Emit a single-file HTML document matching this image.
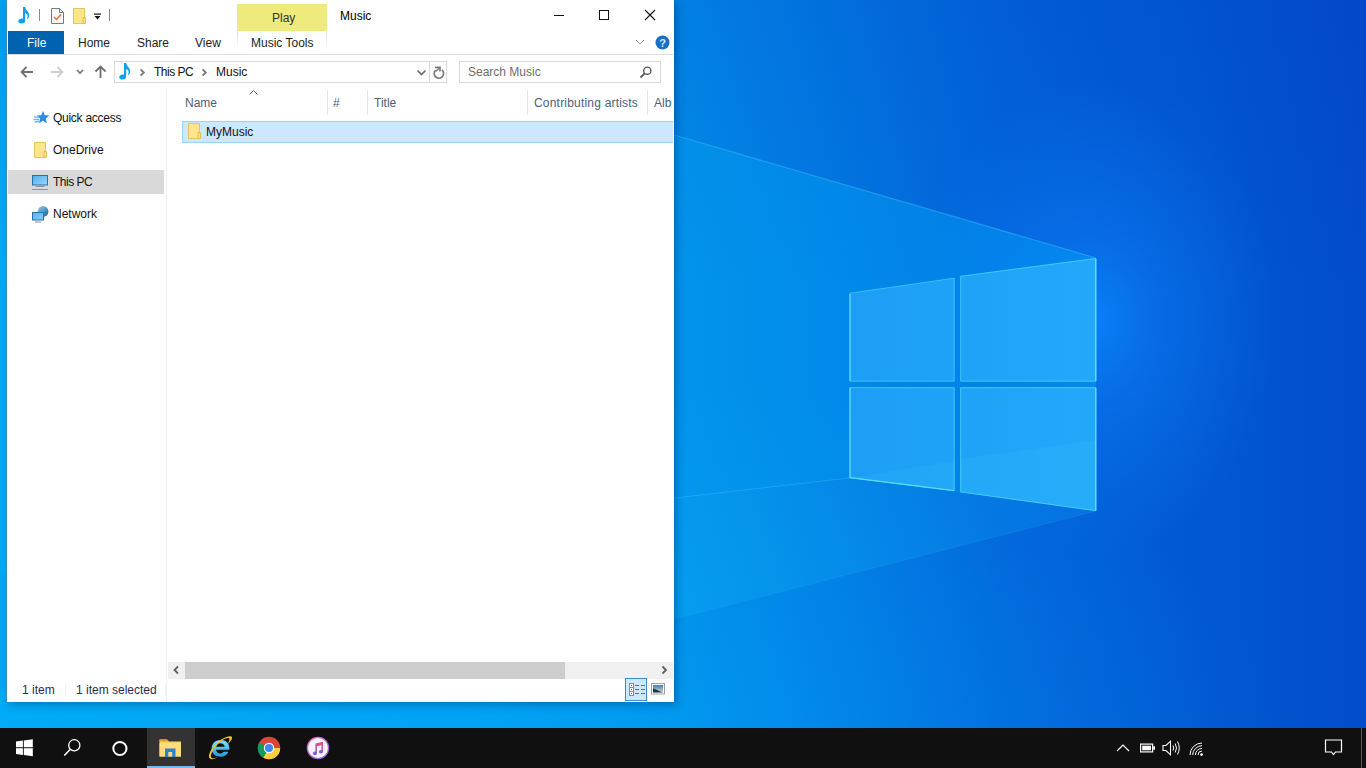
<!DOCTYPE html>
<html><head><meta charset="utf-8">
<style>
html,body{margin:0;padding:0;width:1366px;height:768px;overflow:hidden;font-family:"Liberation Sans",sans-serif;font-size:12px;}
.a{position:absolute;white-space:nowrap}
svg{position:absolute;overflow:visible}
.t{font-size:12px;line-height:14px;}
</style></head>
<body>
<!-- WALLPAPER -->
<svg class="a" style="left:0;top:0" width="1366" height="728" viewBox="0 0 1366 728">
<defs>
<linearGradient id="bg" x1="0" y1="0" x2="1366" y2="0" gradientUnits="userSpaceOnUse">
<stop offset="0" stop-color="#02a8f4"/>
<stop offset="0.493" stop-color="#028ce8"/>
<stop offset="0.622" stop-color="#0276e0"/>
<stop offset="0.732" stop-color="#0264da"/>
<stop offset="0.878" stop-color="#0258d2"/>
<stop offset="1" stop-color="#024ccb"/>
</linearGradient>
<linearGradient id="topdark" x1="0" y1="0" x2="0" y2="728" gradientUnits="userSpaceOnUse">
<stop offset="0" stop-color="#0028b8" stop-opacity="0.12"/>
<stop offset="0.4" stop-color="#0028b8" stop-opacity="0"/>
</linearGradient>
<radialGradient id="cyanbl" cx="640" cy="760" r="640" gradientTransform="translate(640 760) scale(1 0.6) translate(-640 -760)" gradientUnits="userSpaceOnUse">
<stop offset="0" stop-color="#00b0ff" stop-opacity="0.38"/>
<stop offset="1" stop-color="#00b0ff" stop-opacity="0"/>
</radialGradient>
<linearGradient id="beam" x1="674" y1="0" x2="1096" y2="0" gradientUnits="userSpaceOnUse">
<stop offset="0" stop-color="#00b8ff" stop-opacity="0.2"/>
<stop offset="0.42" stop-color="#00b8ff" stop-opacity="0.3"/>
<stop offset="1" stop-color="#00b8ff" stop-opacity="0.32"/>
</linearGradient>
<linearGradient id="floor" x1="300" y1="0" x2="1096" y2="0" gradientUnits="userSpaceOnUse">
<stop offset="0" stop-color="#10c0ff" stop-opacity="0"/>
<stop offset="0.47" stop-color="#10c0ff" stop-opacity="0.2"/>
<stop offset="1" stop-color="#10c0ff" stop-opacity="0.16"/>
</linearGradient>
<radialGradient id="glow" cx="1095" cy="320" r="240" gradientTransform="translate(1095 320) scale(0.75 1.0) translate(-1095 -320)" gradientUnits="userSpaceOnUse">
<stop offset="0" stop-color="#0a82fa" stop-opacity="0.9"/>
<stop offset="0.4" stop-color="#0a78f2" stop-opacity="0.5"/>
<stop offset="1" stop-color="#0a76f0" stop-opacity="0"/>
</radialGradient>
<linearGradient id="pane" x1="849" y1="0" x2="1096" y2="0" gradientUnits="userSpaceOnUse">
<stop offset="0" stop-color="#1c9ef4"/>
<stop offset="1" stop-color="#22a8fa"/>
</linearGradient>
<linearGradient id="botcyan" x1="0" y1="0" x2="700" y2="0" gradientUnits="userSpaceOnUse"><stop offset="0" stop-color="#00b4ff" stop-opacity="0.3"/><stop offset="0.7" stop-color="#00b4ff" stop-opacity="0.25"/><stop offset="1" stop-color="#00b4ff" stop-opacity="0"/></linearGradient>
</defs>
<rect width="1366" height="728" fill="url(#bg)"/>
<rect width="1366" height="728" fill="url(#topdark)"/>
<rect width="1366" height="728" fill="url(#cyanbl)"/>
<rect width="1366" height="728" fill="url(#glow)"/>
<rect x="0" y="690" width="700" height="38" fill="url(#botcyan)"/>
<polygon points="1096,258 0,-61 0,575 849,478 1096,511" fill="url(#beam)"/>
<path d="M1096,258 L674,135" stroke="#50d0ff" stroke-opacity="0.35" stroke-width="1.3"/>
<polygon points="849,478 1096,511 0,791 0,575" fill="url(#floor)"/>
<path d="M849,478 L674,498" stroke="#50d0ff" stroke-opacity="0.3" stroke-width="1"/>
<path d="M1096,511 L674,619" stroke="#50d0ff" stroke-opacity="0.12" stroke-width="1"/>
<g fill="url(#pane)">
<polygon points="849.6,292.9 954.6,277.8 954.6,381.6 849.6,381.6"/>
<polygon points="960.3,275.9 1096.2,258.1 1096.2,381.6 960.3,381.6"/>
<polygon points="849.6,387.3 954.6,387.3 954.6,491.1 849.6,477.9"/>
<polygon points="960.3,387.3 1096.2,387.3 1096.2,511.1 960.3,492.3"/>
</g>
<polygon points="849.6,477.9 954.6,461 954.6,491.1" fill="#40d0ff" fill-opacity="0.14"/>
<polygon points="960.3,459 1096.2,440 1096.2,511.1 960.3,492.3" fill="#40d0ff" fill-opacity="0.14"/>
<g fill="none" stroke="#5ce4fa" stroke-width="1">
<polygon points="850,293.2 954.2,278.2 954.2,381.2 850,381.2" stroke-opacity="0.45"/>
<polygon points="960.7,276.3 1095.8,258.5 1095.8,381.2 960.7,381.2" stroke-opacity="0.55"/>
<polygon points="850,387.7 954.2,387.7 954.2,490.7 850,477.6" stroke-opacity="0.55"/>
<polygon points="960.7,387.7 1095.8,387.7 1095.8,510.7 960.7,491.9" stroke-opacity="0.6"/>
</g>
<g fill="none" stroke="#70f0ff" stroke-width="1.3">
<path d="M850,294 V381 M850,388 V477.6 L954,490.6" stroke-opacity="0.6"/>
<path d="M1095.8,259 V381 M1095.8,388 V510.5" stroke-opacity="0.65"/>
</g>
</svg>

<!-- WINDOW -->
<div class="a" style="left:6px;top:0;width:668px;height:702px;background:#fff;box-shadow:3px 3px 8px rgba(0,20,60,0.3);border-left:1px solid #3d8fc0;box-sizing:border-box"></div>
<div class="a" id="win" style="left:0;top:0;width:674px;height:702px;">
<!-- title bar icons -->
<svg style="left:17px;top:6px" width="14" height="18" viewBox="0 0 14 18"><path d="M6 1 H8.2 C8.5 3.3 10 4.8 11.2 6.2 C12.6 7.8 12.4 10.8 10.9 12.9 L10.1 12.5 C10.9 10.6 10.8 8.9 9.7 8 C9.2 7.6 8.6 7.3 8.2 7.1 V14.8 C8.2 16.6 6.6 17.4 4.6 17.4 C2.6 17.4 1.2 16.6 1.2 15.3 C1.2 13.6 3 12.4 5 12.4 C5.4 12.4 5.7 12.5 6 12.6 Z" fill="#12a0ee"/></svg>
<div class="a" style="left:39px;top:9px;width:1px;height:12px;background:#8a8a8a"></div>
<svg style="left:50px;top:7px" width="15" height="18" viewBox="0 0 15 18"><path d="M1.5 1.5 H9.5 L13.5 5.5 V16.5 H1.5 Z" fill="#f7f7f7" stroke="#7a7a7a" stroke-width="1"/><path d="M9.5 1.5 V5.5 H13.5" fill="none" stroke="#7a7a7a" stroke-width="1"/><path d="M4 10 L6.5 12.5 L11 7.5" fill="none" stroke="#e8713a" stroke-width="1.5"/></svg>
<svg style="left:72px;top:7px" width="16" height="18" viewBox="0 0 16 18"><path d="M1.5 1.5 H12.5 V16.5 H1.5 Z" fill="#fde58c" stroke="#e4c35c" stroke-width="1"/><path d="M11 10.5 H13.5 V16.5 H11 Z" fill="#fbe27e" stroke="#dfbb50" stroke-width="0.9"/></svg>
<svg style="left:93px;top:13px" width="9" height="8" viewBox="0 0 9 8"><rect x="1" y="0.5" width="7" height="1.2" fill="#111"/><path d="M1.5 3 H7.5 L4.5 6.5 Z" fill="#111"/></svg>
<div class="a" style="left:109px;top:9px;width:1px;height:12px;background:#8a8a8a"></div>
<!-- Play contextual tab -->
<div class="a" style="left:237px;top:4px;width:90px;height:27px;background:#eeea7c"></div>
<div class="a" style="left:237px;top:31px;width:1px;height:19px;background:linear-gradient(#dcdcdc,#fff)"></div>
<div class="a" style="left:326px;top:31px;width:1px;height:19px;background:linear-gradient(#dcdcdc,#fff)"></div>
<div class="a t" style="left:272px;top:11px;color:#333;">Play</div>
<div class="a t" style="left:340px;top:9px;color:#000;">Music</div>
<!-- window controls -->
<div class="a" style="left:554px;top:15px;width:10px;height:1px;background:#111"></div>
<div class="a" style="left:599px;top:10px;width:10px;height:10px;box-sizing:border-box;border:1px solid #111"></div>
<svg style="left:644px;top:9px" width="12" height="12" viewBox="0 0 12 12"><path d="M1 1 L11 11 M11 1 L1 11" stroke="#111" stroke-width="1.1"/></svg>
<!-- ribbon tabs -->
<div class="a" style="left:8px;top:31px;width:56px;height:23px;background:#0063b1"></div>
<div class="a t" style="left:27px;top:36px;color:#fff;">File</div>
<div class="a t" style="left:78px;top:36px;color:#222;">Home</div>
<div class="a t" style="left:137px;top:36px;color:#222;">Share</div>
<div class="a t" style="left:195px;top:36px;color:#222;">View</div>
<div class="a t" style="left:251px;top:36px;color:#222;">Music Tools</div>
<div class="a" style="left:7px;top:54px;width:666px;height:1px;background:#dadbdc"></div>
<svg style="left:635px;top:39px" width="10" height="7" viewBox="0 0 10 7"><path d="M1 1 L5 5 L9 1" fill="none" stroke="#9a9a9a" stroke-width="1"/></svg>
<svg style="left:655px;top:35px" width="15" height="15" viewBox="0 0 15 15"><circle cx="7.5" cy="7.5" r="7" fill="#1a6fc0"/><text x="7.5" y="11.6" font-family="Liberation Sans" font-weight="bold" font-size="11" fill="#cfefff" text-anchor="middle">?</text></svg>
<!-- nav arrows -->
<svg style="left:19px;top:65px" width="16" height="14" viewBox="0 0 16 14"><path d="M2.5 7 H14 M7.5 2 L2.5 7 L7.5 12" fill="none" stroke="#707070" stroke-width="1.8"/></svg>
<svg style="left:49px;top:65px" width="16" height="14" viewBox="0 0 16 14"><path d="M2 7 H13.5 M8.5 2 L13.5 7 L8.5 12" fill="none" stroke="#cfcfcf" stroke-width="1.8"/></svg>
<svg style="left:75px;top:68px" width="10" height="7" viewBox="0 0 10 7"><path d="M2 2 L5 5 L8 2" fill="none" stroke="#707070" stroke-width="1.6"/></svg>
<svg style="left:93px;top:64px" width="15" height="16" viewBox="0 0 15 16"><path d="M7.5 2.5 V14 M2.5 7.5 L7.5 2.5 L12.5 7.5" fill="none" stroke="#707070" stroke-width="1.8"/></svg>
<!-- address bar -->
<div class="a" style="left:114px;top:61px;width:333px;height:22px;box-sizing:border-box;border:1px solid #d9d9d9"></div>
<div class="a" style="left:429px;top:61px;width:1px;height:22px;background:#d9d9d9"></div>
<svg style="left:118px;top:62px" width="14" height="18" viewBox="0 0 14 18"><path d="M6 1 H8.2 C8.5 3.3 10 4.8 11.2 6.2 C12.6 7.8 12.4 10.8 10.9 12.9 L10.1 12.5 C10.9 10.6 10.8 8.9 9.7 8 C9.2 7.6 8.6 7.3 8.2 7.1 V14.8 C8.2 16.6 6.6 17.4 4.6 17.4 C2.6 17.4 1.2 16.6 1.2 15.3 C1.2 13.6 3 12.4 5 12.4 C5.4 12.4 5.7 12.5 6 12.6 Z" fill="#12a0ee"/></svg>
<svg style="left:139px;top:68px" width="7" height="9" viewBox="0 0 7 9"><path d="M1.6 1.3 L4.8 4.5 L1.6 7.7" fill="none" stroke="#7a7a7a" stroke-width="1.9"/></svg>
<div class="a t" style="left:154px;top:65px;color:#111;letter-spacing:-0.5px">This PC</div>
<svg style="left:201px;top:68px" width="7" height="9" viewBox="0 0 7 9"><path d="M1.6 1.3 L4.8 4.5 L1.6 7.7" fill="none" stroke="#7a7a7a" stroke-width="1.9"/></svg>
<div class="a t" style="left:216px;top:65px;color:#111;">Music</div>
<svg style="left:416px;top:69px" width="11" height="8" viewBox="0 0 11 8"><path d="M1.5 1.5 L5.5 5.5 L9.5 1.5" fill="none" stroke="#6a6a6a" stroke-width="1.6"/></svg>
<svg style="left:432px;top:65px" width="14" height="14" viewBox="0 0 14 14"><path d="M3.6 5.2 A4.7 4.7 0 1 0 9.9 4.9" fill="none" stroke="#7a7a7a" stroke-width="1.7"/><path d="M3 2.4 H8 V6.6" fill="none" stroke="#7a7a7a" stroke-width="1.6"/><path d="M8 2.4 L4 6.2" stroke="#7a7a7a" stroke-width="1.5"/></svg>
<div class="a" style="left:459px;top:61px;width:202px;height:22px;box-sizing:border-box;border:1px solid #d9d9d9"></div>
<div class="a t" style="left:468px;top:65px;color:#6d6d6d;">Search Music</div>
<svg style="left:639px;top:65px" width="14" height="14" viewBox="0 0 14 14"><circle cx="8.3" cy="5.7" r="3.6" fill="none" stroke="#5a5a5a" stroke-width="1.4"/><path d="M5.7 8.3 L1.5 12.5" stroke="#5a5a5a" stroke-width="1.8"/></svg>
<!-- nav pane -->
<div class="a" style="left:166px;top:88px;width:1px;height:614px;background:#f0f0f0"></div>
<div class="a" style="left:8px;top:170px;width:156px;height:24px;background:#d9d9d9"></div>
<svg style="left:33px;top:110px" width="17" height="16" viewBox="0 0 17 16"><path d="M10 1 L11.8 5.3 L16.3 5.6 L12.8 8.6 L13.9 13.2 L10 10.7 L6 13.2 L7.1 8.6 L3.6 5.6 L8.2 5.3 Z" fill="#2e8de0"/><path d="M1 7 L6 7.2 M0.5 9.5 L6.5 9.5 M1.5 12 L6 11.5" stroke="#6db8f0" stroke-width="1.3"/></svg>
<div class="a t" style="left:53px;top:111px;color:#111;letter-spacing:-0.27px">Quick access</div>
<svg style="left:33px;top:141px" width="16" height="18" viewBox="0 0 16 18"><path d="M1.5 1.5 H12.5 V16.5 H1.5 Z" fill="#fde58c" stroke="#e4c35c" stroke-width="1"/><path d="M11 10.5 H13.5 V16.5 H11 Z" fill="#fbe27e" stroke="#dfbb50" stroke-width="0.9"/></svg>
<div class="a t" style="left:53px;top:143px;color:#111;">OneDrive</div>
<svg style="left:31px;top:174px" width="18" height="17" viewBox="0 0 18 17"><defs><linearGradient id="pcg" x1="0" y1="0" x2="1" y2="1"><stop offset="0" stop-color="#4fb0ee"/><stop offset="1" stop-color="#9ad8fb"/></linearGradient></defs><rect x="1.5" y="1.5" width="15" height="9.5" fill="url(#pcg)" stroke="#2c6ea8" stroke-width="1"/><rect x="5" y="12" width="8" height="1" fill="#8a96a4"/><rect x="1" y="15" width="16" height="1" fill="#8a98a8"/></svg>
<div class="a t" style="left:53px;top:175px;color:#111;letter-spacing:-0.5px">This PC</div>
<svg style="left:31px;top:205px" width="18" height="18" viewBox="0 0 18 18"><defs><linearGradient id="glb" x1="0" y1="0" x2="1" y2="1"><stop offset="0" stop-color="#a8d4ee"/><stop offset="0.5" stop-color="#4a98c8"/><stop offset="1" stop-color="#1e5a88"/></linearGradient><linearGradient id="mng" x1="0" y1="0" x2="1" y2="1"><stop offset="0" stop-color="#4fb0ee"/><stop offset="1" stop-color="#8ad0fa"/></linearGradient></defs><circle cx="12" cy="6.5" r="5.4" fill="url(#glb)"/><path d="M8 4 Q11 2.5 14 5 Q12 8 9 7" fill="#5aa8d8" opacity="0.7"/><rect x="1.5" y="7.5" width="11" height="7.5" fill="url(#mng)" stroke="#2c6ea8" stroke-width="1"/><rect x="4" y="16.5" width="6" height="1" fill="#7a8a9a"/></svg>
<div class="a t" style="left:53px;top:207px;color:#111;">Network</div>
<!-- column headers -->
<div class="a t" style="left:185px;top:96px;color:#4c607a;">Name</div>
<svg style="left:248px;top:89px" width="11" height="7" viewBox="0 0 11 7"><path d="M1.5 5.5 L5.5 1.5 L9.5 5.5" fill="none" stroke="#6a6a6a" stroke-width="1"/></svg>
<div class="a" style="left:327px;top:90px;width:1px;height:25px;background:#e5e5e5"></div>
<div class="a t" style="left:333px;top:96px;color:#4c607a;">#</div>
<div class="a" style="left:367px;top:90px;width:1px;height:25px;background:#e5e5e5"></div>
<div class="a t" style="left:374px;top:96px;color:#4c607a;">Title</div>
<div class="a" style="left:527px;top:90px;width:1px;height:25px;background:#e5e5e5"></div>
<div class="a t" style="left:534px;top:96px;color:#4c607a;letter-spacing:0.2px">Contributing artists</div>
<div class="a" style="left:647px;top:90px;width:1px;height:25px;background:#e5e5e5"></div>
<div class="a" style="left:654px;top:96px;width:18px;overflow:hidden;"><span class="t" style="color:#4c607a;">Album</span></div>
<!-- selected row -->
<div class="a" style="left:182px;top:121px;width:491px;height:22px;box-sizing:border-box;border:1px solid #99d1ff;border-right:none;background:#cce8ff"></div>
<svg style="left:187px;top:122px" width="16" height="18" viewBox="0 0 16 18"><path d="M1.5 1.5 H12.5 V16.5 H1.5 Z" fill="#fde58c" stroke="#e4c35c" stroke-width="1"/><path d="M11 10.5 H13.5 V16.5 H11 Z" fill="#fbe27e" stroke="#dfbb50" stroke-width="0.9"/></svg>
<div class="a t" style="left:206px;top:125px;color:#111;">MyMusic</div>
<!-- h scrollbar -->
<div class="a" style="left:168px;top:662px;width:505px;height:17px;background:#f0f0f0"></div>
<div class="a" style="left:185px;top:662px;width:380px;height:17px;background:#cdcdcd"></div>
<svg style="left:172px;top:665px" width="9" height="10" viewBox="0 0 9 10"><path d="M6 1.5 L2.5 5 L6 8.5" fill="none" stroke="#606060" stroke-width="1.8"/></svg>
<svg style="left:660px;top:665px" width="9" height="10" viewBox="0 0 9 10"><path d="M2.5 1.5 L6 5 L2.5 8.5" fill="none" stroke="#606060" stroke-width="1.8"/></svg>
<!-- status bar -->
<div class="a t" style="left:22px;top:683px;color:#1e3050;">1 item</div>
<div class="a" style="left:65px;top:684px;width:1px;height:12px;background:#f0f0f0"></div>
<div class="a t" style="left:76px;top:683px;color:#1e3050;">1 item selected</div>
<div class="a" style="left:165px;top:684px;width:1px;height:12px;background:#f0f0f0"></div>
<div class="a" style="left:625px;top:678px;width:22px;height:23px;box-sizing:border-box;border:1px solid #3f8cc0;background:#cce8ff"></div>
<svg style="left:628px;top:682px" width="18" height="16" viewBox="0 0 18 16"><rect x="1.5" y="1.5" width="4" height="12" fill="#fff" stroke="#8a8a8a" stroke-width="1"/><path d="M1.5 5.5 H5.5 M1.5 9.5 H5.5" stroke="#8a8a8a" stroke-width="1"/><rect x="3" y="3" width="1" height="1" fill="#555"/><rect x="3" y="7" width="1" height="1" fill="#555"/><rect x="3" y="11" width="1" height="1" fill="#c04040"/><path d="M7 3.5 H11 M13 3.5 H17 M7 7.5 H11 M13 7.5 H17 M7 11.5 H11 M13 11.5 H17" stroke="#6a6a6a" stroke-width="1.1"/></svg>
<svg style="left:651px;top:683px" width="15" height="12" viewBox="0 0 15 12"><rect x="0.5" y="0.5" width="13" height="10.5" fill="#fff" stroke="#a0a0a0" stroke-width="1"/><defs><linearGradient id="sky" x1="0" y1="0" x2="0" y2="1"><stop offset="0" stop-color="#4a7aa8"/><stop offset="1" stop-color="#c8dcea"/></linearGradient></defs><rect x="2" y="2" width="10" height="7.5" fill="url(#sky)"/><path d="M2 5.5 Q5 6 8 8 L12 9.5 H2 Z" fill="#1e3a30"/></svg>
</div>
<!-- TASKBAR -->
<div class="a" style="left:0;top:728px;width:1366px;height:40px;background:#101010">
<svg style="left:16px;top:11px" width="17" height="18" viewBox="0 0 17 18"><path d="M0 2.6 L6.9 1.6 V8.3 H0 Z M7.8 1.5 L16.8 0.2 V8.3 H7.8 Z M0 9.2 H6.9 V15.9 L0 14.9 Z M7.8 9.2 H16.8 V17.3 L7.8 16 Z" fill="#fff"/></svg>
<svg style="left:63px;top:10px" width="19" height="19" viewBox="0 0 19 19"><circle cx="11.3" cy="7.3" r="5.6" fill="none" stroke="#fff" stroke-width="1.3"/><path d="M7.3 11.3 L1.3 17.6" stroke="#fff" stroke-width="1.5"/></svg>
<svg style="left:111px;top:12px" width="18" height="18" viewBox="0 0 18 18"><circle cx="8.9" cy="8.5" r="6.6" fill="none" stroke="#fff" stroke-width="2"/></svg>
<div class="a" style="left:147px;top:0;width:48px;height:40px;background:#333"></div>
<div class="a" style="left:147px;top:38px;width:48px;height:2px;background:#76b9ed"></div>
<svg style="left:159px;top:10px" width="23" height="20" viewBox="0 0 23 20"><path d="M0.5 1.5 H8 L10 3.5 H22 V18.5 H0.5 Z" fill="#f8d36a"/><path d="M0.5 1.5 H8 L10 3.5 H0.5 Z" fill="#e0a32a"/><rect x="0.5" y="5" width="21.5" height="13.5" fill="#fcdc7c"/><path d="M6 19 V10.5 H16.5 V19 H13.2 V14 H9.3 V19 Z" fill="#2b80d6"/></svg>
<svg style="left:207px;top:7px" width="26" height="25" viewBox="0 0 26 25"><defs><linearGradient id="ieg" x1="0" y1="0" x2="0" y2="1"><stop offset="0" stop-color="#7fe0ff"/><stop offset="1" stop-color="#1aa0e0"/></linearGradient></defs><path d="M13.5 5 C8 5 4.6 9 4.6 13.6 C4.6 18.6 8.3 21.8 13.3 21.8 C17 21.8 20 20 21.4 16.8 H16.6 C15.8 18 14.6 18.6 13.4 18.6 C11 18.6 9.2 17 9 14.8 H22.3 C22.4 14.2 22.4 13.6 22.4 13.2 C22.4 8.4 18.8 5 13.5 5 Z M9.1 11.8 C9.4 9.6 11.2 8.2 13.4 8.2 C15.6 8.2 17.4 9.6 17.7 11.8 Z" fill="url(#ieg)"/><path d="M2.6 23.2 C-0.2 20.6 5.8 9.6 14.6 4.2 C21 0.4 25.4 0.4 25.1 3.1 C24.9 5 22.7 7.4 20.6 9.2 C21.9 7 23 4.6 22.3 3.6 C21 1.9 14.6 4.8 9.8 10.2 C5.4 15.1 2.8 20.6 4.4 22.7 C5.3 23.8 7.6 23.4 10.3 22 C7 24.5 4 24.8 2.6 23.2 Z" fill="#f4c425"/></svg>
<svg style="left:257px;top:8px" width="24" height="24" viewBox="0 0 24 24"><circle cx="12" cy="12" r="11.2" fill="#db4437"/><path d="M12 12 L2.3 6.4 A11.2 11.2 0 0 0 6.4 21.7 Z" fill="#0f9d58"/><path d="M12 12 L6.4 21.7 A11.2 11.2 0 0 0 23.2 12 L12 12 Z" fill="#ffcd40"/><path d="M12 6.8 H21.7 L12 12 Z" fill="#db4437"/><circle cx="12" cy="12" r="5.2" fill="#fff"/><circle cx="12" cy="12" r="4.1" fill="#4285f4"/></svg>
<svg style="left:306px;top:8px" width="24" height="24" viewBox="0 0 24 24"><defs><linearGradient id="itg" x1="0" y1="0" x2="0" y2="1"><stop offset="0" stop-color="#fc4c6a"/><stop offset="1" stop-color="#5a6cf0"/></linearGradient><linearGradient id="itr" x1="0" y1="0" x2="1" y2="1"><stop offset="0" stop-color="#f070b0"/><stop offset="1" stop-color="#8a5ae8"/></linearGradient></defs><circle cx="12" cy="12" r="10.6" fill="#f6f2fb" stroke="url(#itr)" stroke-width="1.3"/><path d="M9.4 7.4 L17 5.8 V15.6 A2.1 1.8 0 1 1 15.4 14 V9.3 L11 10.2 V17.2 A2.1 1.8 0 1 1 9.4 15.6 Z" fill="url(#itg)"/></svg>
<svg style="left:1116px;top:16px" width="14" height="8" viewBox="0 0 14 8"><path d="M1 7 L7 1 L13 7" fill="none" stroke="#fff" stroke-width="1.2"/></svg>
<svg style="left:1139px;top:15px" width="17" height="11" viewBox="0 0 17 11"><rect x="1.6" y="1.1" width="12" height="7.8" fill="none" stroke="#fff" stroke-width="1.2"/><rect x="3.2" y="2.7" width="8.8" height="4.6" fill="#fff"/><rect x="14.2" y="3.2" width="1.8" height="3.6" fill="#fff"/></svg>
<svg style="left:1162px;top:12px" width="18" height="16" viewBox="0 0 18 16"><path d="M1 5.5 H4 L8.5 1.2 V14.8 L4 10.5 H1 Z" fill="none" stroke="#fff" stroke-width="1.1"/><path d="M11 5.5 Q12.5 8 11 10.5 M13.2 3.5 Q15.8 8 13.2 12.5 M15.5 1.5 Q19 8 15.5 14.5" fill="none" stroke="#fff" stroke-width="1"/></svg>
<svg style="left:1189px;top:14px" width="15" height="14" viewBox="0 0 15 14"><path d="M1 13 A12 12 0 0 1 13 1 M3.7 13 A9.3 9.3 0 0 1 13 3.7 M6.4 13 A6.6 6.6 0 0 1 13 6.4 M9 13 A4 4 0 0 1 13 9" fill="none" stroke="#fff" stroke-width="1"/><circle cx="12.6" cy="12.6" r="1.4" fill="#fff"/></svg>
<svg style="left:1324px;top:11px" width="19" height="18" viewBox="0 0 19 18"><path d="M1.5 1 H17.5 V13 H11.5 L9.5 15.5 L7.5 13 H1.5 Z" fill="none" stroke="#fff" stroke-width="1.2"/></svg>
<div class="a" style="left:1361px;top:0;width:1px;height:40px;background:#5a5a5a"></div>
</div>
</body></html>
